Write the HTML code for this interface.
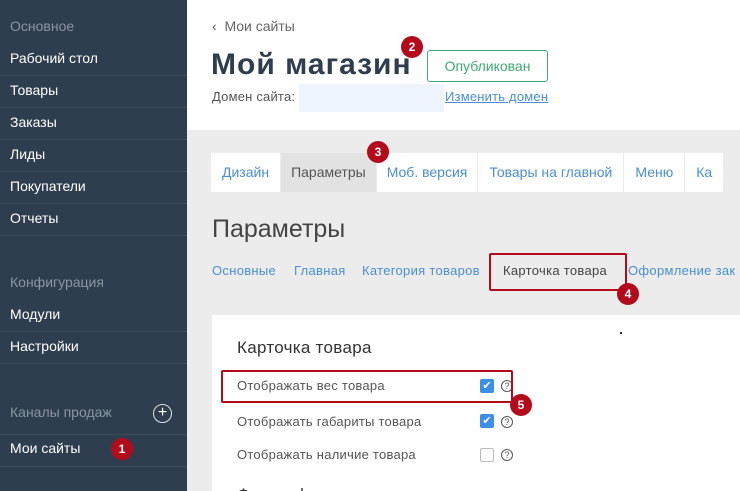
<!DOCTYPE html>
<html><head><meta charset="utf-8"><style>
*{margin:0;padding:0;box-sizing:border-box}
html,body{width:740px;height:491px;overflow:hidden}
body{position:relative;font-family:"Liberation Sans","DejaVu Sans",sans-serif;background:#ececec}
.sb{position:absolute;left:0;top:0;width:187px;height:491px;background:#2f3e4e}
.sb div{position:absolute;left:10px;font-size:14px;color:#fff}
.sb .h{color:#8a959f}
.sb .ln{position:absolute;left:0;width:187px;height:1px;background:#3d4c5c}
.hd{position:absolute;left:187px;top:0;width:553px;height:130px;background:#fff}
.a{position:absolute;white-space:nowrap}
.badge{position:absolute;width:22px;height:22px;border-radius:50%;background:#b30a1c;color:#fff;font-size:12px;font-weight:bold;text-align:center;line-height:22px}
.tabs{position:absolute;top:153px;left:211px;height:39px;display:flex;background:#fff}
.tabs span{display:block;height:39px;line-height:39px;padding:0 11px;font-size:14px;color:#4a8fd0;border-right:1px solid #ececec}
.card{position:absolute;left:212px;top:315px;width:528px;height:176px;background:#fff;overflow:hidden}
.row{position:absolute;left:237px;font-size:13px;color:#555;letter-spacing:0.25px}
.cb{position:absolute;width:14px;height:14px;border-radius:2px}
.q{position:absolute;width:12px;height:12px;border:1px solid #555;border-radius:50%;font-size:9px;line-height:10px;text-align:center;color:#555}
.st{position:absolute;top:263px;font-size:13px;color:#4a8fd0;white-space:nowrap;letter-spacing:0.3px}
</style></head><body>
<div class="sb">
<div class="h" style="top:18px">Основное</div>
<div style="top:50px">Рабочий стол</div><span class="ln" style="top:75px"></span>
<div style="top:82px">Товары</div><span class="ln" style="top:107px"></span>
<div style="top:114px">Заказы</div><span class="ln" style="top:139px"></span>
<div style="top:146px">Лиды</div><span class="ln" style="top:171px"></span>
<div style="top:178px">Покупатели</div><span class="ln" style="top:203px"></span>
<div style="top:210px">Отчеты</div><span class="ln" style="top:235px"></span>
<div class="h" style="top:274px">Конфигурация</div>
<div style="top:306px">Модули</div><span class="ln" style="top:331px"></span>
<div style="top:338px">Настройки</div><span class="ln" style="top:363px"></span>
<div class="h" style="top:404px">Каналы продаж</div>
<span style="position:absolute;left:153px;top:404px;width:19px;height:19px;border:1.5px solid #dfe3e7;border-radius:50%;color:#fff;font-size:16px;line-height:15px;text-align:center">+</span>
<span class="ln" style="top:434px"></span>
<div style="top:440px">Мои сайты</div><span class="ln" style="top:466px"></span>
</div>
<div class="badge" style="left:111px;top:438px">1</div>
<div class="hd"></div>
<div class="a" style="left:212px;top:18px;font-size:14px;color:#666">‹&nbsp; Мои сайты</div>
<div class="a" style="left:211px;top:48px;font-size:30px;font-weight:bold;color:#2f3e4e;letter-spacing:1px">Мой магазин</div>
<div class="badge" style="left:401px;top:36px">2</div>
<div class="a" style="left:427px;top:50px;width:121px;height:32px;border:1px solid #3eaa73;border-radius:3px;color:#3eaa73;font-size:14px;text-align:center;line-height:30px">Опубликован</div>
<div class="a" style="left:212px;top:89px;font-size:13px;color:#555;letter-spacing:0.2px">Домен сайта:</div>
<div class="a" style="left:299px;top:84px;width:145px;height:28px;background:#eef4fb"></div>
<div class="a" style="left:445px;top:89px;font-size:13px;color:#4a8fd0;text-decoration:underline;letter-spacing:0.2px">Изменить домен</div>
<div class="tabs"><span>Дизайн</span><span style="background:#e2e2e2;color:#555;padding:0 10px">Параметры</span><span style="padding:0 10px">Моб. версия</span><span style="padding:0 11px">Товары на главной</span><span>Меню</span><span>Ка</span></div>
<div class="badge" style="left:367px;top:141px">3</div>
<div class="a" style="left:212px;top:215px;font-size:25px;color:#444">Параметры</div>
<div class="st" style="left:212px">Основные</div>
<div class="st" style="left:294px">Главная</div>
<div class="st" style="left:362px">Категория товаров</div>
<div class="st" style="left:503px;color:#444">Карточка товара</div>
<div class="st" style="left:628px">Оформление зак</div>
<div class="a" style="left:489px;top:253px;width:138px;height:38px;border:2px solid #b30a1c;border-radius:2px"></div>
<div class="badge" style="left:617px;top:283px">4</div>
<div class="card"><div class="a" style="left:25px;top:170px;font-size:17px;color:#333">Фото и ф</div></div>
<div class="a" style="left:237px;top:338px;font-size:17px;color:#333;letter-spacing:0.3px">Карточка товара</div>
<div class="row" style="top:378px">Отображать вес товара</div>
<div class="row" style="top:414px">Отображать габариты товара</div>
<div class="row" style="top:447px">Отображать наличие товара</div>
<div class="cb" style="left:480px;top:379px;background:#3d8fe6;color:#fff;font-size:11px;line-height:14px;text-align:center">✔</div>
<div class="cb" style="left:480px;top:414px;background:#3d8fe6;color:#fff;font-size:11px;line-height:14px;text-align:center">✔</div>
<div class="cb" style="left:480px;top:448px;border:1px solid #bbb"></div>
<div class="q" style="left:501px;top:380px">?</div>
<div class="q" style="left:501px;top:416px">?</div>
<div class="q" style="left:501px;top:449px">?</div>
<div class="a" style="left:221px;top:370px;width:292px;height:33px;border:2px solid #b30a1c;border-radius:2px"></div>
<div class="badge" style="left:510px;top:394px">5</div>
<div class="a" style="left:620px;top:332px;width:2px;height:2px;background:#333"></div>
</body></html>
